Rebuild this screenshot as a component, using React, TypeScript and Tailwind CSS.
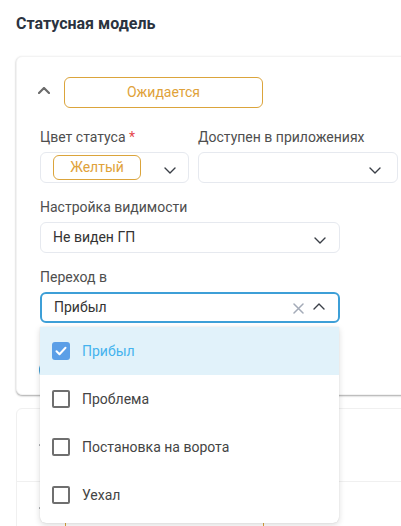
import { useState } from "react";

const font = { fontFamily: "Roboto, 'Noto Sans', sans-serif" };

function ChevronDown({ className = "" }: { className?: string }) {
  return (
    <svg width="12" height="7" viewBox="0 0 12 7" fill="none" className={className}>
      <path d="M1 1l5 5 5-5" stroke="#3a3f47" strokeWidth="1.4" strokeLinecap="round" strokeLinejoin="round" />
    </svg>
  );
}

function ChevronUp({ className = "", color = "#3a3f47", width = 1.4 }: { className?: string; color?: string; width?: number }) {
  return (
    <svg width="12" height="7" viewBox="0 0 12 7" fill="none" className={className}>
      <path d="M1 6l5-5 5 5" stroke={color} strokeWidth={width} strokeLinecap="round" strokeLinejoin="round" />
    </svg>
  );
}

function StatusBadge({ label }: { label?: string }) {
  return (
    <div className="w-[199px] h-[31px] flex items-center justify-center rounded-[6px] border border-[#dba43b] text-[14px] text-[#e0a23a]">
      {label}
    </div>
  );
}

function Checkbox({ checked }: { checked: boolean }) {
  if (checked) {
    return (
      <span className="w-[18px] h-[18px] rounded-[3px] bg-[#5b9fe7] flex items-center justify-center">
        <svg width="12" height="10" viewBox="0 0 12 10" fill="none">
          <path d="M1.5 5.2l3 3 6-6.4" stroke="#fff" strokeWidth="2" strokeLinecap="round" strokeLinejoin="round" />
        </svg>
      </span>
    );
  }
  return <span className="w-[18px] h-[18px] rounded-[2px] border-2 border-[#6f6f6f] box-border" />;
}

const options = ["Прибыл", "Проблема", "Постановка на ворота", "Уехал"];

export default function App() {
  const [selected] = useState<string[]>(["Прибыл"]);

  return (
    <div className="w-[401px] h-[526px] overflow-hidden bg-white relative" style={font}>
      <h2 className="pl-4 pt-[14px] text-[16px] leading-5 font-bold text-[#2b3340]">Статусная модель</h2>

      <div className="ml-4 mt-[22px] w-[420px] bg-white rounded-[6px] border border-[#f3f3f3] shadow-[0_1px_2px_rgba(0,0,0,0.35)] pl-[23px] pt-[20px] pb-[12px]">
        <div className="flex items-center">
          <ChevronUp className="-ml-[2px] -mt-[4px]" color="#6b6b6b" width={2.2} />
          <div className="ml-[14px]">
            <StatusBadge label="Ожидается" />
          </div>
        </div>

        <div className="mt-[19px] flex gap-[9px]">
          <div className="w-[149px]">
            <div className="text-[14px] leading-5 text-[#4e4e4e]">
              Цвет статуса <span className="text-[#e5484d]">*</span>
            </div>
            <div className="mt-[5px] h-[31px] rounded-[6px] border border-[#e6e9ef] flex items-center pl-3 pr-3">
              <span className="w-[88px] h-[25px] rounded-[6px] border border-[#dba43b] text-[14px] text-[#e0a23a] flex items-center justify-center">
                Желтый
              </span>
              <ChevronDown className="ml-auto mt-[5px]" />
            </div>
          </div>
          <div className="w-[200px]">
            <div className="text-[14px] leading-5 text-[#4e4e4e]">Доступен в приложениях</div>
            <div className="mt-[5px] h-[31px] rounded-[6px] border border-[#e6e9ef] flex items-center pr-4">
              <ChevronDown className="ml-auto mt-[5px]" />
            </div>
          </div>
        </div>

        <div className="mt-[14px] w-[300px]">
          <div className="text-[14px] leading-5 text-[#4e4e4e]">Настройка видимости</div>
          <div className="mt-[5px] h-[31px] rounded-[6px] border border-[#e6e9ef] flex items-center pl-3 pr-[13px] text-[14px] text-[#333]">
            Не виден ГП
            <ChevronDown className="ml-auto mt-[5px]" />
          </div>
        </div>

        <div className="mt-[14px] w-[300px]">
          <div className="text-[14px] leading-5 text-[#4e4e4e]">Переход в</div>
          <div className="mt-[5px] h-[31px] rounded-[6px] border-2 border-[#3d9fd7] flex items-center pl-3 pr-[13px] text-[14px] text-[#333]">
            {selected.join(", ")}
            <svg width="11" height="11" viewBox="0 0 11 11" className="ml-auto mt-[1px]" fill="none">
              <path d="M1 1l9 9M10 1l-9 9" stroke="#a4abb8" strokeWidth="1.5" strokeLinecap="round" />
            </svg>
            <ChevronUp className="ml-[9px] -mt-[2px]" />
          </div>
        </div>

        <div className="mt-[35px] -ml-[1px] h-[24px] w-[120px] rounded-[12px] bg-[#3d9fd7]" />
      </div>

      <div className="ml-4 mt-[13px] w-[420px] border border-[#f0f0f0] rounded-[6px]">
        <div className="h-[72px] pt-[21px] pl-[22px] flex items-start">
          <ChevronDown className="mt-[14px]" />
          <div className="ml-[14px]">
            <StatusBadge />
          </div>
        </div>
        <div className="h-[72px] pt-[31px] pl-[22px] border-t border-[#f0f0f0] flex items-start">
          <ChevronDown className="-mt-[6px]" />
          <div className="ml-[14px]">
            <StatusBadge />
          </div>
        </div>
      </div>

      <div className="absolute left-[40px] top-[327px] w-[299px] bg-white rounded-b-[6px] shadow-[0_2px_6px_rgba(0,0,0,0.14),0_0_1px_rgba(0,0,0,0.18)] pb-1">
        {options.map((opt) => {
          const on = selected.includes(opt);
          return (
            <div key={opt} className={`h-[48px] flex items-center pl-3 ${on ? "bg-[#e1f2fa]" : ""}`}>
              <Checkbox checked={on} />
              <span className={`ml-3 text-[14px] ${on ? "text-[#45b3ee]" : "text-[#444]"}`}>{opt}</span>
            </div>
          );
        })}
      </div>
    </div>
  );
}
